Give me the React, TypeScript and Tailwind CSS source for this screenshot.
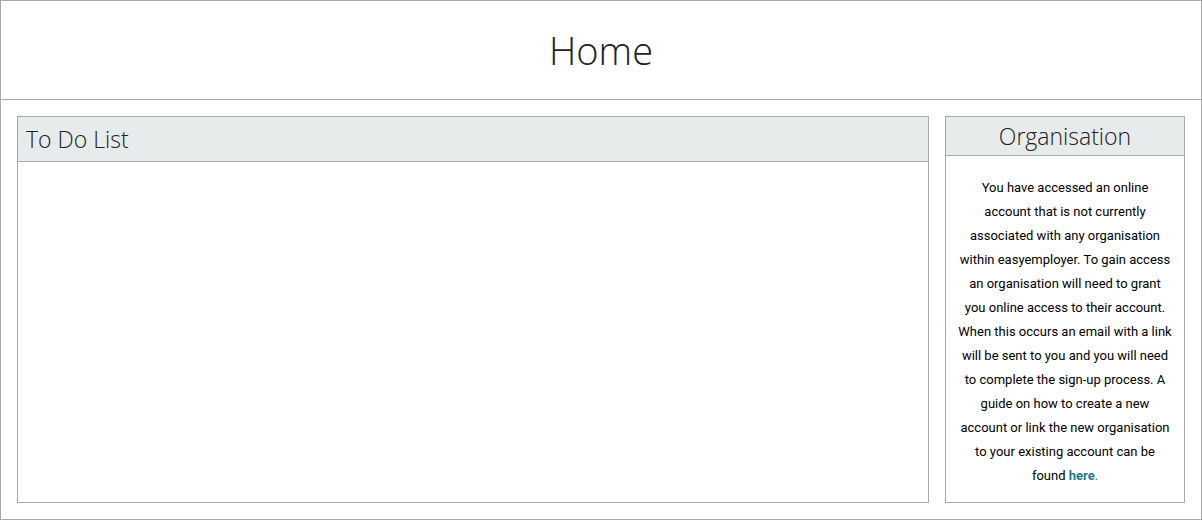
import React from 'react';

const heading = { fontFamily: '"Open Sans", Lato, sans-serif' };

const orgLines = [
  'You have accessed an online',
  'account that is not currently',
  'associated with any organisation',
  'within easyemployer. To gain access',
  'an organisation will need to grant',
  'you online access to their account.',
  'When this occurs an email with a link',
  'will be sent to you and you will need',
  'to complete the sign-up process. A',
  'guide on how to create a new',
  'account or link the new organisation',
  'to your existing account can be',
];

export default function App() {
  return (
    <div className="w-[1202px] h-[520px] border border-[#a9a9a9] bg-white flex flex-col">
      <div className="h-[99px] border-b border-[#a9a9a9] flex items-center justify-center shrink-0">
        <h1 className="text-[38px] font-light text-[#222] leading-none" style={heading}>
          Home
        </h1>
      </div>

      <div className="flex-1 flex gap-4 p-4">
        {/* To Do List */}
        <div className="flex-1 border border-[#a9a9a9] flex flex-col">
          <div className="h-[45px] bg-[#e8ebec] border-b border-[#a9a9a9] flex items-center px-2">
            <h2 className="text-[23px] font-light text-[#222]" style={heading}>
              To Do List
            </h2>
          </div>
          <div className="flex-1"></div>
        </div>

        {/* Organisation */}
        <div className="w-[240px] border border-[#a9a9a9] flex flex-col">
          <div className="h-[39px] bg-[#e8ebec] border-b border-[#a9a9a9] flex items-center justify-center">
            <h2 className="text-[23px] font-light text-[#222]" style={heading}>
              Organisation
            </h2>
          </div>
          <p
            className="pt-[20px] text-[13px] leading-[24px] text-black text-center whitespace-nowrap"
            style={{ fontFamily: 'Roboto, "Liberation Sans", sans-serif' }}
          >
            {orgLines.map((line) => (
              <span key={line} className="block">
                {line}
              </span>
            ))}
            <span className="block">
              found <a className="font-bold text-[#1b7c8a]">here</a>
              <span className="text-[#1b7c8a]">.</span>
            </span>
          </p>
        </div>
      </div>
    </div>
  );
}
